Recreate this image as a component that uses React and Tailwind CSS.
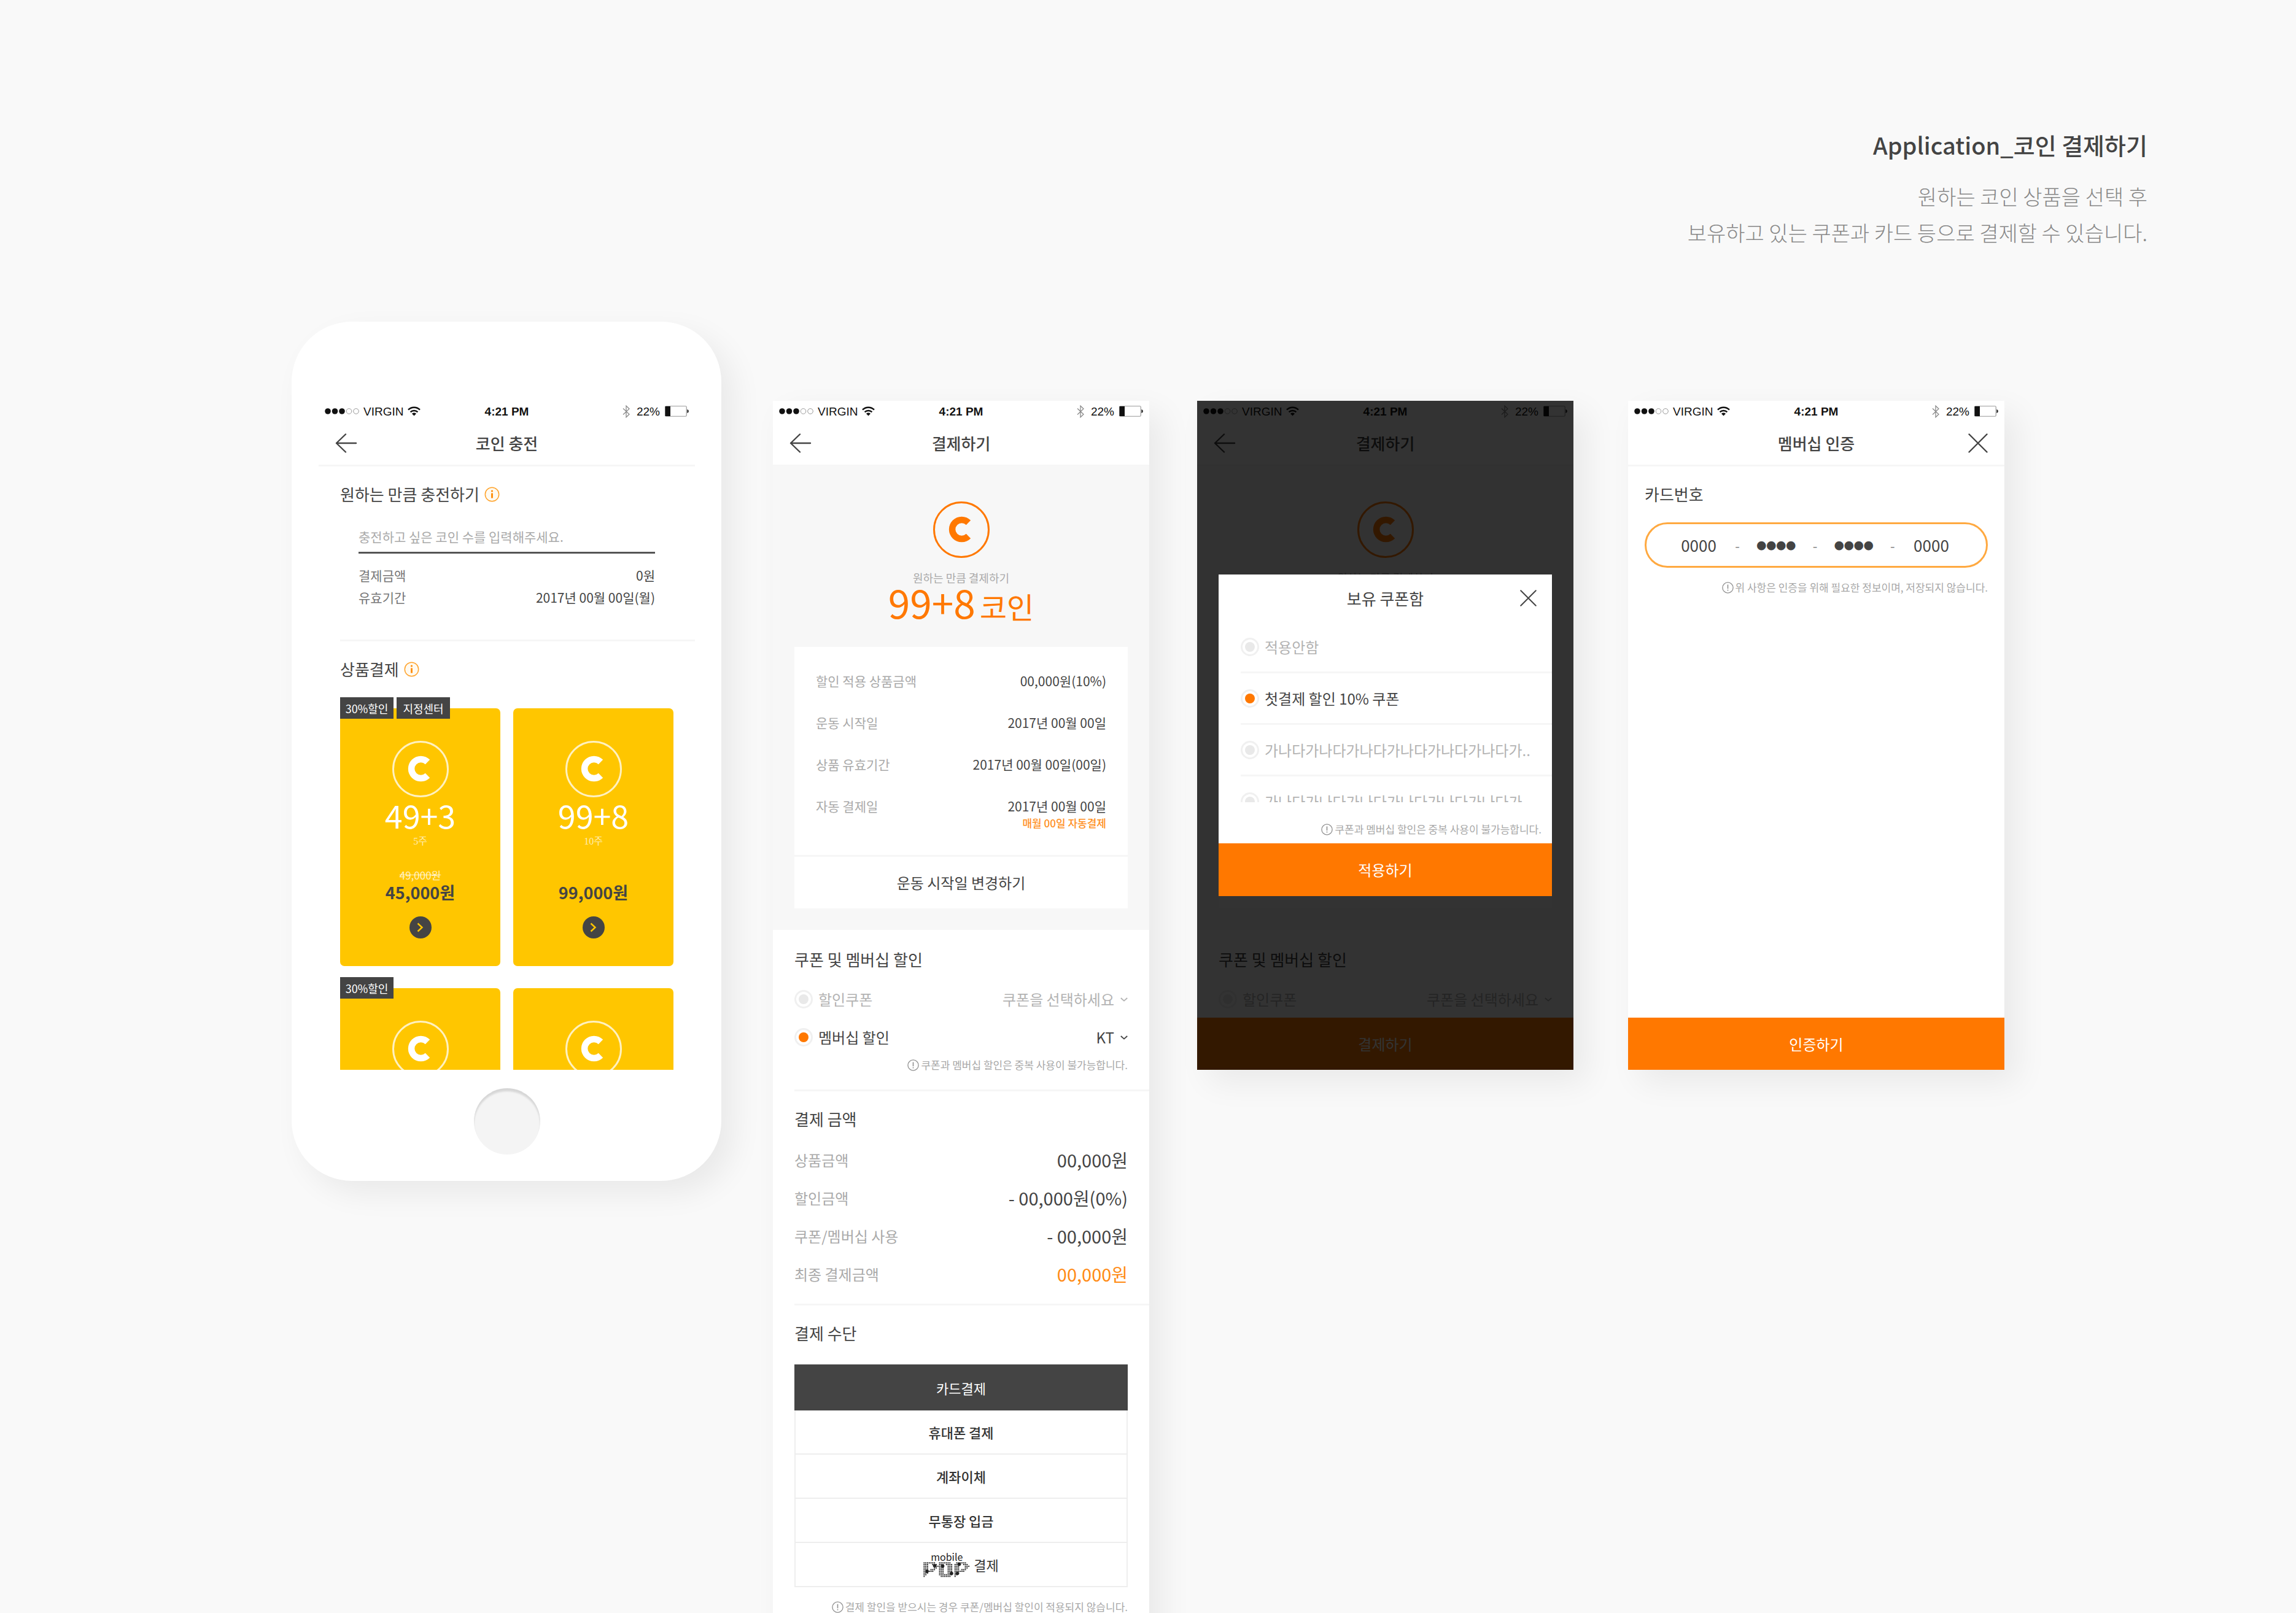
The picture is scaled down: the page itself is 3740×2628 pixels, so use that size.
import { useId } from "react";

const SHADOW = "shadow-[20px_20px_50px_rgba(0,0,0,0.065)]";

function BackIcon() {
  return (
    <svg width="36" height="32" viewBox="0 0 36 32" fill="none" stroke="currentColor" strokeWidth="2.4" strokeLinecap="round" strokeLinejoin="round">
      <path d="M34 16H2M17 1.5 2 16l15 14.5" />
    </svg>
  );
}

function CloseIcon({ size }) {
  return (
    <svg width={size} height={size} viewBox="0 0 32 32" fill="none" stroke="currentColor" strokeWidth="2.4" strokeLinecap="round">
      <path d="M1.5 1.5l29 29M30.5 1.5l-29 29" />
    </svg>
  );
}

function CoinIcon({ ring, letter }) {
  return (
    <svg width="92" height="92" viewBox="0 0 92 92" fill="none" aria-hidden="true">
      <circle cx="46" cy="46" r="44.5" stroke={letter} strokeOpacity={ring} strokeWidth="3" />
      <path d="M57.5 34.5a15.5 15.5 0 1 0 0 22" stroke={letter} strokeWidth="10.5" />
    </svg>
  );
}

function InfoIcon() {
  return (
    <svg width="25" height="25" viewBox="0 0 25 25" fill="none" aria-hidden="true">
      <circle cx="12.5" cy="12.5" r="11.2" fill="#fffaf0" stroke="#ffa32b" strokeWidth="1.5" />
      <path d="M12.5 10.5v8" stroke="#ff8a00" strokeWidth="2.8" />
      <circle cx="12.5" cy="7" r="1.6" fill="#ff8a00" />
    </svg>
  );
}

function NoticeIcon() {
  return (
    <svg width="19" height="19" viewBox="0 0 19 19" fill="none" stroke="#8f8f8f" aria-hidden="true">
      <circle cx="9.5" cy="9.5" r="8.6" strokeWidth="1.3" />
      <path d="M9.5 4.6v6.6M9.5 12.8v1.8" strokeWidth="1.6" />
    </svg>
  );
}

function ChevronDown() {
  return (
    <svg width="12" height="7" viewBox="0 0 12 7" fill="none" stroke="currentColor" strokeWidth="1.8" aria-hidden="true">
      <path d="M.8 1 6 5.6 11.2 1" />
    </svg>
  );
}

function StatusBar() {
  return (
    <div className="grid h-[34px] grid-cols-3 items-center px-[10px] font-['Liberation_Sans',Arial,sans-serif] text-[19px] leading-none text-[#111]">
      <div className="flex items-center gap-[7px]">
        <svg width="56" height="10" viewBox="0 0 56 10" aria-hidden="true">
          <circle cx="5" cy="5" r="4.8" fill="#111" />
          <circle cx="16.5" cy="5" r="4.8" fill="#111" />
          <circle cx="28" cy="5" r="4.8" fill="#111" />
          <circle cx="39.5" cy="5" r="4.3" fill="none" stroke="#999" strokeWidth="1" />
          <circle cx="51" cy="5" r="4.3" fill="none" stroke="#999" strokeWidth="1" />
        </svg>
        <span>VIRGIN</span>
        <svg width="21" height="16" viewBox="0 0 21 16" fill="none" stroke="#111" strokeWidth="2.5" aria-hidden="true">
          <path d="M1 5.6a13.6 13.6 0 0 1 19 0" />
          <path d="M4.6 9.4a8.5 8.5 0 0 1 11.8 0" />
          <path d="M10.5 15.6 7 12a5 5 0 0 1 7 0z" fill="#111" stroke="none" />
        </svg>
      </div>
      <span className="text-center font-bold">4:21 PM</span>
      <div className="flex items-center justify-end">
        <svg className="mr-[11px]" width="12" height="21" viewBox="0 0 12 21" fill="none" stroke="#8a8a8a" strokeWidth="1.3" aria-hidden="true">
          <path d="M1 5.5 11 15 6 19.8V1.2L11 6 1 15.5" />
        </svg>
        <span className="mr-[8px]">22%</span>
        <svg width="39" height="18" viewBox="0 0 39 18" aria-hidden="true">
          <rect x="0.75" y="0.75" width="34.5" height="16.5" rx="1.5" fill="none" stroke="#999" strokeWidth="1.2" />
          <rect x="0.5" y="1" width="8.5" height="16" fill="#111" />
          <path d="M36.4 6v6c1.6-.4 2.4-1.500 2.400-3s-.8-2.600-2.400-3z" fill="#222" />
        </svg>
      </div>
    </div>
  );
}

function TitleBar({ title, back, close }) {
  return (
    <header className="border-b-[3px] border-[#f6f6f6] bg-white">
      <StatusBar />
      <div className="grid h-[70px] grid-cols-[1fr_auto_1fr] items-center px-[27px] text-[#444]">
        <div className="flex">
          {back && (
            <button type="button" aria-label="뒤로">
              <BackIcon />
            </button>
          )}
        </div>
        <h1 className="text-[26px] leading-[36px] font-medium">{title}</h1>
        <div className="flex justify-end">
          {close && (
            <button type="button" aria-label="닫기">
              <CloseIcon size={32} />
            </button>
          )}
        </div>
      </div>
    </header>
  );
}

function SectionTitle({ children, info }) {
  return (
    <h2 className="flex items-center gap-[8px] pt-[27px] text-[26px] leading-[36px] text-[#444]">
      {children}
      {info && <InfoIcon />}
    </h2>
  );
}

function Notice({ children }) {
  return (
    <p className="flex items-center justify-end gap-[3px] text-[17px] leading-[24px] text-[#a8a8a8]">
      <NoticeIcon />
      {children}
    </p>
  );
}

function Divider() {
  return <div className="h-[3px] bg-[#f6f6f6]" />;
}

function Radio({ name, label, checked }) {
  return (
    <label className={checked ? "flex items-center gap-[9px] text-[24px] leading-[36px] text-[#444]" : "flex items-center gap-[9px] text-[24px] leading-[36px] text-[#b3b3b3]"}>
      <input
        type="radio"
        name={name}
        defaultChecked={checked}
        className="grid size-[30px] shrink-0 appearance-none place-content-center rounded-full border-[3px] border-[#f0f0f0] before:size-[16px] before:rounded-full before:bg-[#e9e9e9] checked:before:bg-[#ff7800]"
      />
      <span className="whitespace-nowrap">{label}</span>
    </label>
  );
}

function SelectBox({ label, value, active }) {
  return (
    <div className={active ? "flex items-center gap-[10px] text-[#444]" : "flex items-center gap-[10px] text-[#b3b3b3]"}>
      <select aria-label={label} className="field-sizing-content appearance-none bg-transparent text-right text-[24px] leading-[36px]">
        <option>{value}</option>
      </select>
      <ChevronDown />
    </div>
  );
}

function Badge({ children }) {
  return <span className="flex h-[35px] w-[87px] items-center justify-center bg-[#444] text-[18px] leading-none text-white">{children}</span>;
}

function ProductCard({ coins, weeks, oldPrice, price, badges }) {
  return (
    <article className="relative flex h-[420px] flex-col items-center rounded-[7px] bg-[#ffc600] pt-[53px]">
      <div className="absolute -top-[18px] left-0 flex gap-[5px]">
        {badges.map((badge) => (
          <Badge key={badge}>{badge}</Badge>
        ))}
      </div>
      <CoinIcon ring="0.75" letter="#ffffff" />
      <p className="mt-[3px] text-[52px] leading-[52px] text-white">{coins}</p>
      <p className="mt-[5px] font-['Liberation_Serif','Noto_Sans_CJK_KR',serif] text-[16px] leading-[24px] text-white/70">{weeks}</p>
      <p className="mt-[33px] h-[20px] text-[17px] leading-[20px] text-white/75 line-through">{oldPrice}</p>
      <p className="text-[27px] leading-[36px] font-bold text-[#444]">{price}</p>
      <button type="button" aria-label="선택" className="mt-[21px] flex size-[36px] items-center justify-center rounded-full bg-[#444]">
        <svg width="11" height="16" viewBox="0 0 11 16" fill="none" stroke="#ffc600" strokeWidth="2.4">
          <path d="m1.500 1.500 7 6.500-7 6.500" />
        </svg>
      </button>
    </article>
  );
}

function ChargeScreen() {
  return (
    <section className="h-[1090px] overflow-hidden bg-white">
      <TitleBar title="코인 충전" back />
      <div className="px-[35px]">
        <SectionTitle info>원하는 만큼 충전하기</SectionTitle>
        <div className="mt-[29px] px-[30px]">
          <input
            type="text"
            aria-label="코인 수"
            placeholder="충전하고 싶은 코인 수를 입력해주세요."
            className="block h-[50px] w-full border-b-[3px] border-[#555] pb-[4px] text-[21px] placeholder:text-[#aaa]"
          />
          <dl className="mt-[17px] text-[21px] leading-[36px]">
            <div className="flex justify-between">
              <dt className="text-[#777]">결제금액</dt>
              <dd className="text-[#444]">0원</dd>
            </div>
            <div className="flex justify-between">
              <dt className="text-[#777]">유효기간</dt>
              <dd className="text-[#444]">2017년 00월 00일(월)</dd>
            </div>
          </dl>
        </div>
      </div>
      <div className="mt-[51px] ml-[35px]">
        <Divider />
      </div>
      <div className="px-[35px]">
        <SectionTitle info>상품결제</SectionTitle>
        <div className="mt-[46px] grid grid-cols-2 gap-x-[21px] gap-y-[36px]">
          <ProductCard coins="49+3" weeks="5주" oldPrice="49,000원" price="45,000원" badges={["30%할인", "지정센터"]} />
          <ProductCard coins="99+8" weeks="10주" price="99,000원" badges={[]} />
          <ProductCard coins="49+3" weeks="5주" oldPrice="49,000원" price="45,000원" badges={["30%할인"]} />
          <ProductCard coins="99+8" weeks="10주" price="99,000원" badges={[]} />
        </div>
      </div>
    </section>
  );
}

const orderRows = [
  ["할인 적용 상품금액", "00,000원(10%)"],
  ["운동 시작일", "2017년 00월 00일"],
  ["상품 유효기간", "2017년 00월 00일(00일)"],
  ["자동 결제일", "2017년 00월 00일"],
];

function OrderSummary() {
  return (
    <div className="flex flex-col items-center bg-[#f7f7f7] px-[35px] pt-[57px] pb-[35px]">
      <CoinIcon ring="1" letter="#ff7800" />
      <p className="mt-[20px] text-[18px] leading-[24px] text-[#aaa]">원하는 만큼 결제하기</p>
      <p className="flex h-[54px] items-baseline gap-[7px] text-[64px] leading-[54px] text-[#ff7800]">
        99+8<span className="text-[48px]">코인</span>
      </p>
      <div className="mt-[47px] w-full bg-white">
        <dl className="flex flex-col gap-[40px] px-[35px] pt-[41px] text-[21px] leading-[28px]">
          {orderRows.map(([label, value]) => (
            <div key={label} className="flex justify-between">
              <dt className="text-[#aaa]">{label}</dt>
              <dd className="text-[#444]">{value}</dd>
            </div>
          ))}
        </dl>
        <p className="mb-[38px] px-[35px] text-right text-[17px] leading-[28px] font-medium text-[#ff8f1f]">매월 00일 자동결제</p>
        <Divider />
        <button type="button" className="h-[84px] w-full text-[24px] text-[#444]">
          운동 시작일 변경하기
        </button>
      </div>
    </div>
  );
}

function DiscountSection() {
  const group = useId();
  return (
    <div className="px-[35px] pt-[3px]">
      <SectionTitle>쿠폰 및 멤버십 할인</SectionTitle>
      <div className="mt-[29px] flex flex-col gap-[26px]">
        <div className="flex items-center justify-between">
          <Radio name={group} label="할인쿠폰" />
          <SelectBox label="할인쿠폰" value="쿠폰을 선택하세요" />
        </div>
        <div className="flex items-center justify-between">
          <Radio name={group} label="멤버십 할인" checked />
          <SelectBox label="멤버십" value="KT" active />
        </div>
      </div>
      <div className="mt-[15px]">
        <Notice>쿠폰과 멤버십 할인은 중복 사용이 불가능합니다.</Notice>
      </div>
    </div>
  );
}

const amountRows = [
  ["상품금액", "00,000원", "text-[29px] text-[#444]"],
  ["할인금액", "- 00,000원(0%)", "text-[29px] text-[#444]"],
  ["쿠폰/멤버십 사용", "- 00,000원", "text-[29px] text-[#444]"],
  ["최종 결제금액", "00,000원", "text-[29px] text-[#ff8a14]"],
];

const popDots = [
  "XXXXXXX..XXXXXXX...XXXXXX..",
  "XXX..XXX.XXX.XXXX.XXXX.XXX.",
  "XXX...XXXXXX..XXX.XXX...XXX",
  "XXX...XX.XXX..XXX.XXX...XX.",
  "XXX.XXX..XXX..XXX.XXX.XXX..",
  "XXXXXX...XXX..XXX.XXXXXX...",
  "XXX......XXX..XXX.XXX......",
  "XX.......XXXXXXXX.XX.......",
  "X.........XXXXXX..X........",
];

const popNodes = [
  [18.5, 6],
  [6, 15],
  [31.5, 6.5],
  [46, 18.5],
  [58.5, 3.5],
  [55.5, 18.5],
];

function MobilePopLogo() {
  return (
    <span className="flex flex-col items-center gap-[2px] text-[#222]">
      <span className="text-[16px] leading-[14px]">mobile</span>
      <svg width="76" height="25" viewBox="0 0 76 25" role="img" aria-label="POP" fill="currentColor">
        {popDots.flatMap((row, y) =>
          [...row].map((dot, x) => (dot === "X" ? <rect key={`${x}-${y}`} x={x * 2.8 + 0.4} y={y * 2.75 + 0.4} width="1.9" height="1.9" /> : null))
        )}
        {popNodes.map(([x, y]) => (
          <circle key={`${x}-${y}`} cx={x} cy={y} r="2.8" />
        ))}
      </svg>
    </span>
  );
}

function PaymentScreen() {
  return (
    <section className={`${SHADOW} mt-[129px] ml-[84px] w-[613px] shrink-0 bg-white pb-[60px]`}>
      <TitleBar title="결제하기" back />
      <OrderSummary />
      <DiscountSection />
      <div className="mt-[28px] ml-[35px]">
        <Divider />
      </div>
      <div className="px-[35px]">
        <SectionTitle>결제 금액</SectionTitle>
        <dl className="mt-[31px] flex flex-col gap-[26px]">
          {amountRows.map(([label, value, style]) => (
            <div key={label} className="flex h-[36px] items-center justify-between">
              <dt className="text-[24px] leading-[36px] text-[#aaa]">{label}</dt>
              <dd className={style}>{value}</dd>
            </div>
          ))}
        </dl>
      </div>
      <div className="mt-[30px] ml-[35px]">
        <Divider />
      </div>
      <div className="px-[35px]">
        <SectionTitle>결제 수단</SectionTitle>
        <div className="mt-[33px] flex flex-col text-[22px] leading-[30px] font-medium text-[#333]">
          <button type="button" className="h-[75px] bg-[#444] font-normal text-white">
            카드결제
          </button>
          {["휴대폰 결제", "계좌이체", "무통장 입금"].map((method) => (
            <button key={method} type="button" className="h-[72px] border-x-2 border-b-2 border-[#eee]">
              {method}
            </button>
          ))}
          <button type="button" className="flex h-[72px] items-center justify-center gap-[6px] border-x-2 border-b-2 border-[#eee] font-normal">
            <MobilePopLogo />
            <span>결제</span>
          </button>
        </div>
        <div className="mt-[20px]">
          <Notice>결제 할인을 받으시는 경우 쿠폰/멤버십 할인이 적용되지 않습니다.</Notice>
        </div>
      </div>
    </section>
  );
}

const coupons = ["적용안함", "첫결제 할인 10% 쿠폰", "가나다가나다가나다가나다가나다가나다가..", "가나다가나다가나다가나다가나다가나다가.."];

function CouponDialog() {
  const group = useId();
  return (
    <div role="dialog" aria-label="보유 쿠폰함" className="absolute inset-x-[35px] top-[283px] bg-white">
      <div className="grid h-[77px] grid-cols-[1fr_auto_1fr] items-center px-[25px] text-[#444]">
        <h2 className="col-start-2 text-[26px] leading-[36px]">보유 쿠폰함</h2>
        <button type="button" aria-label="닫기" className="justify-self-end">
          <CloseIcon size={27} />
        </button>
      </div>
      <ul className="ml-[36px] h-[294px] overflow-hidden">
        {coupons.map((coupon, index) => (
          <li key={index} className="flex h-[84px] items-center border-b-[3px] border-[#f6f6f6]">
            <Radio name={group} label={coupon} checked={index === 1} />
          </li>
        ))}
      </ul>
      <div className="mt-[32px] pr-[17px]">
        <Notice>쿠폰과 멤버십 할인은 중복 사용이 불가능합니다.</Notice>
      </div>
      <button type="button" className="mt-[11px] h-[86px] w-full bg-[#ff7800] text-[24px] text-white">
        적용하기
      </button>
    </div>
  );
}

function CouponScreen() {
  return (
    <section className={`${SHADOW} relative mt-[129px] ml-[78px] flex h-[1090px] w-[613px] shrink-0 flex-col overflow-hidden bg-white`}>
      <TitleBar title="결제하기" back />
      <div className="min-h-0 flex-1 overflow-hidden">
        <OrderSummary />
        <DiscountSection />
      </div>
      <button type="button" className="h-[85px] w-full shrink-0 bg-[#ff7800] text-[24px] text-white">
        결제하기
      </button>
      <div className="absolute inset-0 bg-black/80" />
      <CouponDialog />
    </section>
  );
}

function CardInput({ label, value, masked }) {
  return (
    <input
      type="text"
      aria-label={label}
      defaultValue={value}
      className={masked ? "w-[68px] text-center text-[16px] leading-[36px]" : "w-[68px] text-center text-[26px] leading-[36px]"}
    />
  );
}

function MembershipScreen() {
  return (
    <section className={`${SHADOW} mt-[129px] ml-[89px] flex h-[1090px] w-[613px] shrink-0 flex-col bg-white`}>
      <TitleBar title="멤버십 인증" close />
      <div className="flex-1 px-[27px]">
        <SectionTitle>카드번호</SectionTitle>
        <div className="mt-[28px] flex h-[74px] items-center justify-between rounded-full border-[3px] border-[#ffa940] pr-[55px] pl-[51px] text-[#444]">
          <CardInput label="카드번호 1" value="0000" />
          <span className="text-[22px] text-[#888]">-</span>
          <CardInput label="카드번호 2" value="●●●●" masked />
          <span className="text-[22px] text-[#888]">-</span>
          <CardInput label="카드번호 3" value="●●●●" masked />
          <span className="text-[22px] text-[#888]">-</span>
          <CardInput label="카드번호 4" value="0000" />
        </div>
        <div className="mt-[20px]">
          <Notice>위 사항은 인증을 위해 필요한 정보이며, 저장되지 않습니다.</Notice>
        </div>
      </div>
      <button type="button" className="h-[85px] w-full bg-[#ff7800] text-[24px] text-white">
        인증하기
      </button>
    </section>
  );
}

export default function App() {
  return (
    <main className="flex h-screen flex-col overflow-hidden bg-[#f9f9f9] font-['Noto_Sans_CJK_KR',sans-serif]">
      <header className="pt-[206px] pr-[242px] text-right">
        <h1 className="text-[38px] leading-[60px] font-medium text-[#444]">Application_코인 결제하기</h1>
        <p className="mt-[24px] text-[34px] leading-[59px] font-light text-[#888]">
          원하는 코인 상품을 선택 후<br />
          보유하고 있는 쿠폰과 카드 등으로 결제할 수 있습니다.
        </p>
      </header>
      <div className="mt-[116px] flex items-start justify-center">
        <div className={`${SHADOW} flex w-[700px] shrink-0 flex-col rounded-[98px] bg-white pt-[129px] pr-[43px] pb-[43px] pl-[44px]`}>
          <ChargeScreen />
          <button
            type="button"
            aria-label="홈"
            className="mt-[30px] size-[108px] self-center rounded-full bg-[#f4f4f4] shadow-[inset_0_5px_3px_rgba(0,0,0,0.12)]"
          />
        </div>
        <PaymentScreen />
        <CouponScreen />
        <MembershipScreen />
      </div>
    </main>
  );
}
